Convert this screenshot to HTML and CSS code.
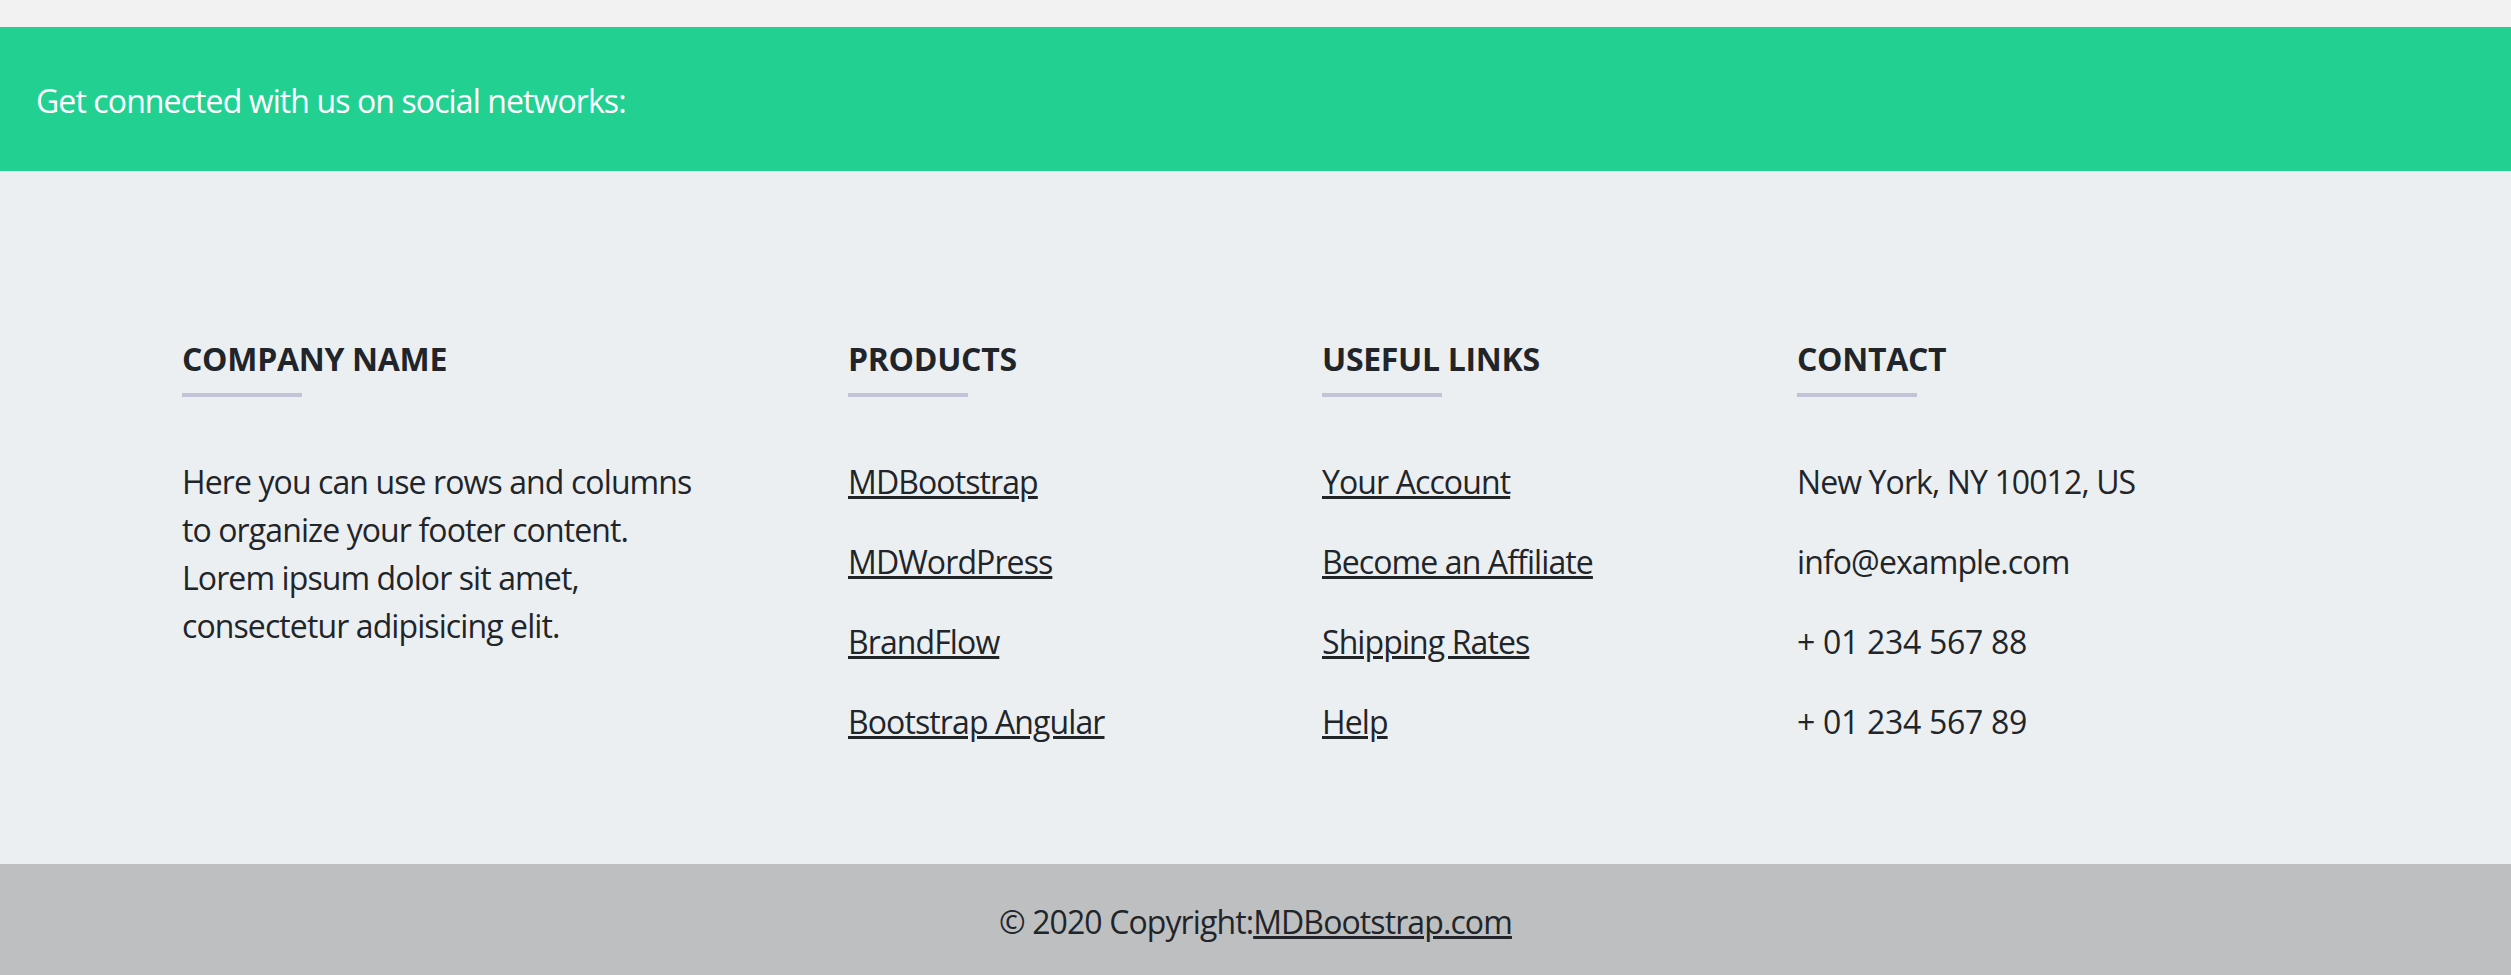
FILE: index.html
```html
<!DOCTYPE html>
<html lang="en">
<head>
<meta charset="utf-8">
<title>Footer</title>
<link rel="stylesheet" href="styles.css">
</head>
<body>
<footer class="footer">
  <section class="social">
    <span>Get connected with us on social networks:</span>
  </section>
  <section class="main">
    <div class="cols">
      <div class="col">
        <h6 class="col-title">Company name</h6>
        <hr class="rule">
        <p class="about">Here you can use rows and columns to organize your footer content. Lorem ipsum dolor sit amet, consectetur adipisicing elit.</p>
      </div>
      <div class="col">
        <h6 class="col-title">Products</h6>
        <hr class="rule">
        <ul class="links">
          <li><a href="#">MDBootstrap</a></li>
          <li><a href="#">MDWordPress</a></li>
          <li><a href="#">BrandFlow</a></li>
          <li><a href="#">Bootstrap Angular</a></li>
        </ul>
      </div>
      <div class="col">
        <h6 class="col-title">Useful links</h6>
        <hr class="rule">
        <ul class="links">
          <li><a href="#">Your Account</a></li>
          <li><a href="#">Become an Affiliate</a></li>
          <li><a href="#">Shipping Rates</a></li>
          <li><a href="#">Help</a></li>
        </ul>
      </div>
      <div class="col">
        <h6 class="col-title">Contact</h6>
        <hr class="rule">
        <ul class="links">
          <li>New York, NY 10012, US</li>
          <li>info@example.com</li>
          <li class="num">+ 01 234 567 88</li>
          <li class="num">+ 01 234 567 89</li>
        </ul>
      </div>
    </div>
  </section>
  <div class="copyright">© 2020 Copyright:<a href="#">MDBootstrap.com</a></div>
</footer>
</body>
</html>
```
FILE: styles.css
```css
html, body {
  margin: 0;
  padding: 0;
}

body {
  background: #f2f2f2;
  font-family: "Open Sans", "Noto Sans", "Liberation Sans", sans-serif;
  font-size: 32px;
  line-height: 48px;
  color: #212529;
  letter-spacing: -0.9px;
}

.footer {
  margin-top: 27px;
}

.social {
  background: #22d192;
  color: #ffffff;
  padding: 50px 36px 46px;
}

.main {
  background: #eceff1;
  padding: 164px 0 118px 182px;
}

.cols {
  display: grid;
  grid-template-columns: 666px 474px 475px auto;
}

.col-title {
  margin: 0;
  font-size: 32px;
  line-height: 48px;
  font-weight: 700;
  text-transform: uppercase;
  letter-spacing: -0.3px;
}

.rule {
  margin: 10px 0 61px;
  width: 120px;
  height: 4px;
  border: 0;
  background: #c1c4d6;
}

.about {
  margin: 0;
  max-width: 540px;
}

.links {
  list-style: none;
  margin: 0;
  padding: 0;
  display: flex;
  flex-direction: column;
  gap: 32px;
}

.num {
  letter-spacing: -0.3px;
}

.links a,
.copyright a {
  color: #212529;
  text-decoration: underline;
}

.copyright {
  background: #bdbfc1;
  padding: 34px 32px 30px;
  text-align: center;
}
```
